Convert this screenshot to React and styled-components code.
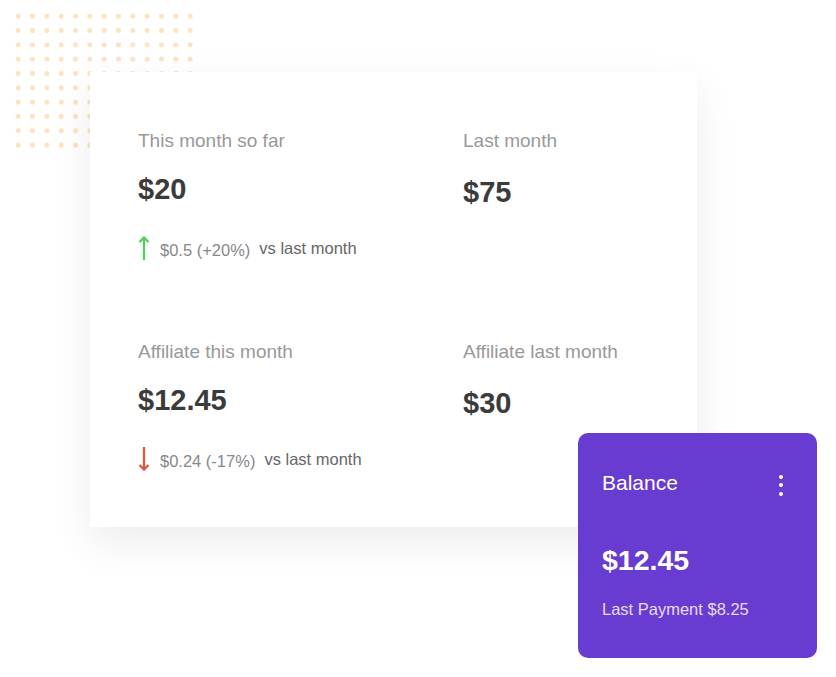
import React from "react";
import styled, { createGlobalStyle } from "styled-components";

const GlobalStyle = createGlobalStyle`
  body {
    margin: 0;
    background: #fff;
    font-family: "Liberation Sans", Arial, sans-serif;
  }
`;

const Page = styled.div`
  position: relative;
  width: 836px;
  height: 677px;
  padding: 72px 0 0 90px;
  box-sizing: border-box;
`;

const Dots = styled.div`
  position: absolute;
  left: 11px;
  top: 9px;
  width: 186px;
  height: 143px;
  background-image: radial-gradient(circle, #fde3c2 2.3px, transparent 2.9px);
  background-size: 14.33px 14.33px;
`;

const Card = styled.div`
  position: relative;
  width: 607px;
  box-sizing: border-box;
  padding: 58px 48px 56px;
  background: #fff;
  box-shadow: 0 16px 40px rgba(0, 0, 0, 0.075);
  display: grid;
  grid-template-columns: 325px 1fr;
  row-gap: 81px;
`;

const Stat = styled.div`
  display: flex;
  flex-direction: column;
`;

const Label = styled.div`
  font-size: 19px;
  line-height: 22px;
  color: #999;
`;

const Amount = styled.div`
  margin-top: ${(props) => (props.$right ? "23px" : "20px")};
  font-size: 29px;
  line-height: 34px;
  font-weight: 700;
  color: #3b3b3b;
`;

const Change = styled.div`
  margin-top: 30px;
  display: flex;
  align-items: center;
  height: 24px;
  font-size: 16.5px;
`;

const Delta = styled.span`
  margin-left: 10px;
  color: #888;
  position: relative;
  top: 2px;
`;

const Versus = styled.span`
  margin-left: 9px;
  color: #666;
`;

const BalanceCard = styled.div`
  position: absolute;
  left: 578px;
  top: 433px;
  width: 239px;
  height: 225px;
  box-sizing: border-box;
  padding: 37px 34px 0 24px;
  border-radius: 10px;
  background: #683cd0;
  color: #fff;
`;

const BalanceHead = styled.div`
  display: flex;
  justify-content: space-between;
  align-items: center;
  height: 26px;
  font-size: 21px;
`;

const Kebab = styled.div`
  display: flex;
  flex-direction: column;
  gap: 4.5px;
  margin-top: 4px;
  & > span {
    width: 4px;
    height: 4px;
    border-radius: 50%;
    background: #fff;
  }
`;

const BalanceAmount = styled.div`
  margin-top: 47px;
  font-size: 28.5px;
  line-height: 34px;
  font-weight: 700;
`;

const LastPayment = styled.div`
  margin-top: 22px;
  font-size: 16.5px;
  line-height: 20px;
  color: #e6dcf8;
`;

const Arrow = ({ down }) => (
  <svg width="12" height="26" viewBox="0 0 12 26" fill="none">
    {down ? (
      <path
        d="M6 1V24M1.5 19L6 23.5L10.5 19"
        stroke="#e0563f"
        strokeWidth="2.3"
      />
    ) : (
      <path
        d="M6 25V2.5M1.5 7L6 2.5L10.5 7"
        stroke="#4fd25c"
        strokeWidth="2.3"
      />
    )}
  </svg>
);

const stats = [
  { label: "This month so far", amount: "$20", delta: "$0.5 (+20%)" },
  { label: "Last month", amount: "$75", right: true },
  { label: "Affiliate this month", amount: "$12.45", delta: "$0.24 (-17%)", down: true },
  { label: "Affiliate last month", amount: "$30", right: true },
];

export default function App() {
  return (
    <Page>
      <GlobalStyle />
      <Dots />
      <Card>
        {stats.map((s) => (
          <Stat key={s.label}>
            <Label>{s.label}</Label>
            <Amount $right={s.right}>{s.amount}</Amount>
            {s.delta && (
              <Change>
                <Arrow down={s.down} />
                <Delta>{s.delta}</Delta>
                <Versus>vs last month</Versus>
              </Change>
            )}
          </Stat>
        ))}
      </Card>
      <BalanceCard>
        <BalanceHead>
          Balance
          <Kebab>
            <span />
            <span />
            <span />
          </Kebab>
        </BalanceHead>
        <BalanceAmount>$12.45</BalanceAmount>
        <LastPayment>Last Payment $8.25</LastPayment>
      </BalanceCard>
    </Page>
  );
}
